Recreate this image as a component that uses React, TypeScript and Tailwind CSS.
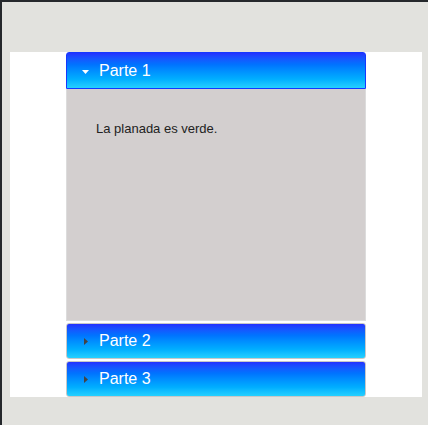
import { useState } from 'react';

const sections = [
  { title: 'Parte 1', body: 'La planada es verde.' },
  { title: 'Parte 2', body: 'El río es azul.' },
  { title: 'Parte 3', body: 'El cielo es claro.' },
];

export default function App() {
  const [open, setOpen] = useState(0);

  return (
    <div className="flex h-[425px] w-[428px] flex-col bg-[#e2e2de] font-['Liberation_Sans',Arial,sans-serif]">
      <div className="h-[2px] w-full bg-[#25282c]" />
      <div className="flex flex-1">
        <div className="w-[2px] bg-[#25282c]" />
        <div className="pl-[8px] pt-[50px]">
          <div className="h-[345px] w-[412px] bg-white pl-[56px]">
            <div className="flex w-[300px] flex-col">
              {sections.map((s, i) => {
                const active = i === open;
                return (
                  <div key={s.title} className={i > 0 ? 'mt-[2px]' : ''}>
                    <button
                      onClick={() => setOpen(i)}
                      className={`flex w-full items-center border bg-gradient-to-b from-[#2430ff] to-[#24d0ff] pl-[15px] text-left text-[16px] text-white ${
                        active ? 'h-[37px] rounded-t-[3px] border-[#1438ff] pt-[1px]' : 'h-[36px] rounded-[3px] border-[#c8c8c8]'
                      }`}
                    >
                      {active ? (
                        <svg width="7" height="4" viewBox="0 0 7 4" className="mr-[10px] mt-[1px]">
                          <polygon points="0,0 7,0 3.5,4" fill="#ffffff" />
                        </svg>
                      ) : (
                        <svg width="4" height="7" viewBox="0 0 4 7" className="ml-[2px] mr-[11px]">
                          <polygon points="0,0 4,3.5 0,7" fill="#444444" />
                        </svg>
                      )}
                      <span>{s.title}</span>
                    </button>
                    {active && (
                      <div className="h-[232px] border border-t-0 border-[#dcdcdc] bg-[#d3cfcf] px-[29px] pt-[30px] text-[13px] text-[#222222]">
                        {s.body}
                      </div>
                    )}
                  </div>
                );
              })}
            </div>
          </div>
        </div>
      </div>
    </div>
  );
}
